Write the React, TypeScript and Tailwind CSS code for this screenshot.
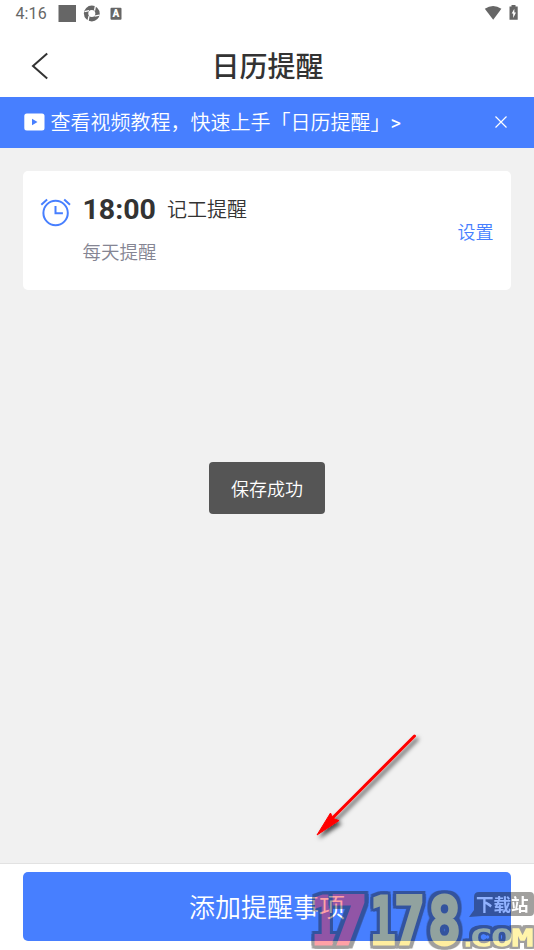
import React from "react";

const sans = "font-[Roboto,'Noto_Sans_CJK_SC',sans-serif]";

function StatusBar() {
  return (
    <div className="flex h-[27px] items-center pr-[14px] pl-[15.500px] text-[#666]">
      <span className="w-[42.500px] pt-px text-[16px] leading-[26px] tracking-[0.100px]">4:16</span>
      <svg className="h-[27px] w-[66px]" viewBox="58 0 66 27" fill="#666">
        <rect x="58.500" y="5" width="17.500" height="17" />
        <circle cx="91.800" cy="13.500" r="7.900" />
        <circle cx="91.800" cy="13.500" r="3.500" fill="#fff" />
        <path d="M89 10.700l-4.500 1M94.500 10.700l1-5M94.600 16.200l4.800-1M89 16.200l-1 5" stroke="#fff" strokeWidth="1.300" />
        <rect x="110.500" y="7.700" width="11" height="12" rx="1" />
        <text x="116" y="17.300" textAnchor="middle" fill="#fff" fontSize="10" fontWeight="900" fontFamily="Roboto">A</text>
      </svg>
      <svg className="ml-auto h-[27px] w-[36px]" viewBox="484 0 36 27" fill="#666">
        <path d="M484.800 8.700q8.300-5.500 16.600 0L493.200 19.700z" />
        <path d="M511.500 5h4v1.400h2.200v13.400h-8.200V6.400h2z" />
        <path d="M514.300 8.700l-2.600 4.900h1.500v4.300l2.800-5.300h-1.600z" fill="#fff" />
      </svg>
    </div>
  );
}

function Header() {
  return (
    <div className="flex h-[70px] items-center pt-[7px] pl-[30px]">
      <svg className="h-[30px] w-[20px]" viewBox="30 50.500 20 30" fill="none" stroke="#333" strokeWidth="2">
        <path d="M47.200 53L33 65.500L47.200 78" />
      </svg>
      <h1 className="flex-1 pt-[5px] pr-[49px] text-center text-[28px] leading-[40px] font-medium text-[#333]">日历提醒</h1>
    </div>
  );
}

function Banner() {
  return (
    <div className="flex h-[51px] items-center bg-[#477fff] pr-[27px] pl-[24px] text-white">
      <svg className="mb-px h-[18px] w-[21px]" viewBox="0 0 21 18">
        <rect x="0.300" y="0.500" width="20.200" height="17" rx="2.500" fill="white" />
        <path d="M8 5.700v6.600l5.500-3.300z" fill="#477fff" />
      </svg>
      <span className="ml-[5.500px] pt-px text-[20px] leading-[30px] font-[350] whitespace-nowrap">
        查看视频教程，快速上手「日历提醒」<span className="font-normal">&gt;</span>
      </span>
      <svg className="mb-px ml-auto h-[12px] w-[12px]" viewBox="0 0 12 12" stroke="white" strokeWidth="1.200">
        <path d="M0.500 0.500l11 11M11.500 0.500l-11 11" />
      </svg>
    </div>
  );
}

function ReminderCard() {
  return (
    <section className="mx-[23px] mt-[22.500px] flex h-[119.500px] rounded-[5px] bg-white pl-[17px]">
      <svg className="mt-[26px] h-[32px] w-[32px]" viewBox="40 197 32 32" fill="none" stroke="#477fff" strokeWidth="2">
        <circle cx="55.600" cy="213" r="12.200" />
        <path d="M55.500 206v7.300h7.400M41.300 204.700l5.800-5.200M70 204.700l-5.800-5.200" />
      </svg>
      <div className="ml-[10.500px] pt-[22px]">
        <div className="flex h-[34px] items-center">
          <strong className="w-[84.500px] pt-px text-[28.500px] leading-[34px] font-bold text-[#333]">18:00</strong>
          <span className="text-[20px] leading-[30px] font-[350] text-[#333]">记工提醒</span>
        </div>
        <p className="mt-[11px] text-[18.500px] leading-[30px] font-[350] text-[#858593]">每天提醒</p>
      </div>
      <button className="mr-[17.500px] ml-auto pt-[4px] text-[18px] font-[350] text-[#477fff]">设置</button>
    </section>
  );
}

function Arrow() {
  return (
    <svg className="absolute top-[725px] left-[305px] h-[125px] w-[125px]" viewBox="305 725 125 125">
      <defs>
        <filter id="arrow-shadow" x="-20%" y="-20%" width="150%" height="150%">
          <feDropShadow dx="2.500" dy="3" stdDeviation="2" floodOpacity="0.700" />
        </filter>
      </defs>
      <g filter="url(#arrow-shadow)" fill="#f00">
        <path d="M414.500 736L331 819.500" stroke="#f00" strokeWidth="3" strokeLinecap="round" />
        <path d="M317 835L330.500 813L333 818.500L339 820.500z" stroke="#f00" strokeWidth="1" />
      </g>
    </svg>
  );
}

const digits = [
  { char: "1", x: 311.6, color: "#ff1723", scale: 0.67 },
  { char: "7", x: 330, color: "#ff1723", scale: 0.95 },
  { char: "1", x: 370, color: "#ffd711", scale: 0.65 },
  { char: "7", x: 394, color: "#ffd711", scale: 0.78 },
  { char: "8", x: 428, color: "#ffd711", scale: 0.83 },
];

function Watermark() {
  return (
    <svg className="absolute bottom-0 left-[308px] h-[64px] w-[226px] opacity-40" viewBox="308 886 226 64">
      <g fontFamily="'DejaVu Sans Mono'" fontWeight="700" strokeLinejoin="miter" strokeMiterlimit="3">
        {digits.map((d) => (
          <text
            key={d.x}
            transform={`translate(${d.x} 944) scale(${d.scale} 1)`}
            fontSize="66"
            fill={d.color}
            stroke={d.color}
            strokeWidth="3"
            style={{ paintOrder: "stroke", filter: "drop-shadow(4px 0 0 #171310) drop-shadow(-4px 0 0 #171310) drop-shadow(0 3px 0 #171310) drop-shadow(0 -3px 0 #171310)" }}
          >
            {d.char}
          </text>
        ))}
        <g fontSize="23" fontWeight="400" fill="#ffe62e" stroke="#ffe62e" strokeWidth="1.600" style={{ filter: "drop-shadow(2.5px 0 0 #171310) drop-shadow(-2.5px 0 0 #171310) drop-shadow(0 2.5px 0 #171310) drop-shadow(0 -2.5px 0 #171310)" }}>
          <text x="461" y="946">.</text>
          <text x="471" y="945.500" textLength="62" lengthAdjust="spacingAndGlyphs">COM</text>
        </g>
      </g>
      <path d="M479 892h51q4 0 4 4v16q0 4-4 4h-48l-13 1l5-7v-13q0-5 5-5z" fill="#171310" />
      <text x="476" y="911" fontFamily="'Noto Sans CJK SC'" fontSize="17.500" fontWeight="700" fill="#fff">下载站</text>
    </svg>
  );
}

export default function App() {
  return (
    <main className={`relative flex h-[950px] w-[534px] flex-col overflow-hidden bg-[#f1f1f1] ${sans}`}>
      <header className="bg-white">
        <StatusBar />
        <Header />
      </header>
      <Banner />
      <ReminderCard />
      <footer className="mt-auto h-[87px] border-t border-[#e2e2e2] bg-white px-[23px] pt-[8px]">
        <button className="h-[69px] w-full rounded-[5px] bg-[#477fff] pt-[3px] text-[26px] font-[350] text-white">添加提醒事项</button>
      </footer>
      <div className="absolute top-[462px] left-[209px] flex h-[52px] w-[116px] items-center justify-center rounded-[4px] bg-[#555] pt-[2px] text-[18px] font-[350] text-white">
        保存成功
      </div>
      <Arrow />
      <Watermark />
    </main>
  );
}
